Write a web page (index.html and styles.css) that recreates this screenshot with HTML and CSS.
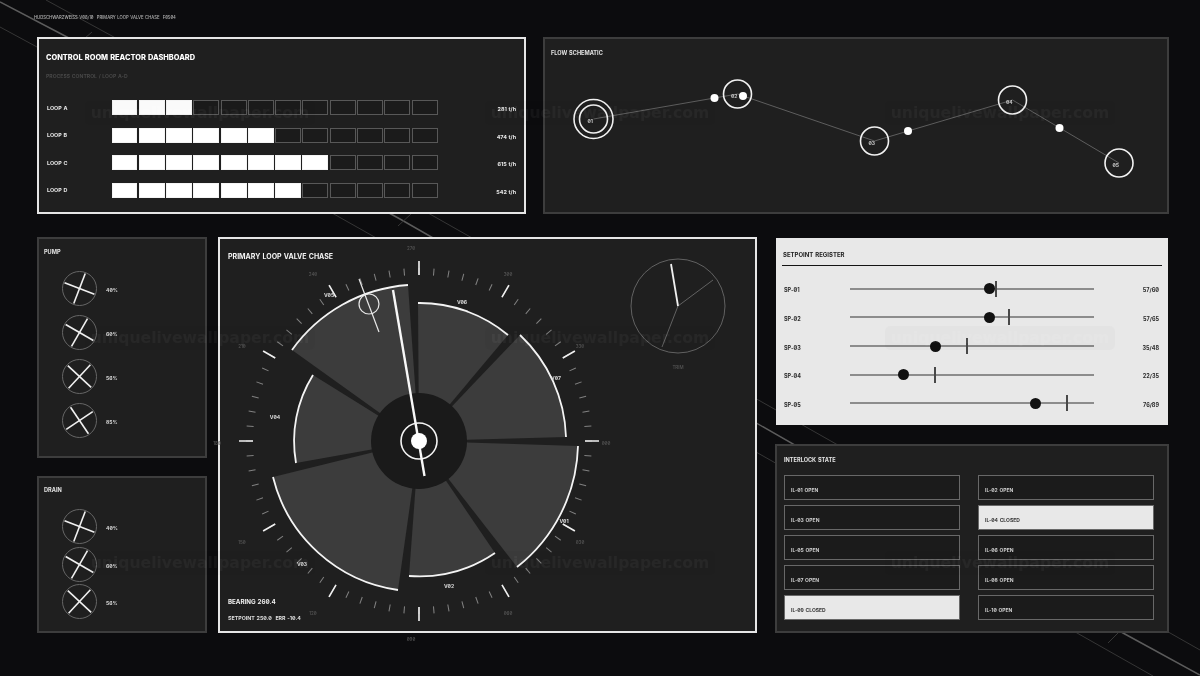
FILE: index.html
```html
<!DOCTYPE html>
<html lang="en">
<head>
    <meta charset="UTF-8">
    <title>Control Room Reactor Dashboard</title>
    <link rel="stylesheet" href="styles.css">
</head>
<body>
<svg class="streaks" viewBox="0 0 1200 676">
    <polyline class="bright" points="0,2 67,37 400,219 1123,633 1200,675"/>
    <polyline points="46,0 112,36 428,213 1170,633 1200,650"/>
    <polyline points="0,27 37,47 332,213 1077,633 1153,676"/>
    <line x1="85" y1="38" x2="92" y2="32"/>
    <line x1="398" y1="226" x2="412" y2="213"/>
    <line x1="1108" y1="643" x2="1118" y2="633"/>
</svg>

<div class="screen">
    <div class="hud-line">HUDSCHWARZWEISS V08/10&nbsp; PRIMARY LOOP VALVE CHASE&nbsp; F0504</div>

    <div class="row-top">
        <section class="panel panel-strong summary">
            <h1>CONTROL ROOM REACTOR DASHBOARD</h1>
            <p class="sub">PROCESS CONTROL / LOOP A-D</p>
            <div class="loops">
                <div class="loop">
                    <span class="loop-name">LOOP A</span>
                    <div class="cells">
                        <i class="on"></i><i class="on"></i><i class="on"></i><i></i><i></i><i></i><i></i><i></i><i></i><i></i><i></i><i></i>
                    </div>
                    <span class="loop-val">281 t/h</span>
                </div>
                <div class="loop">
                    <span class="loop-name">LOOP B</span>
                    <div class="cells">
                        <i class="on"></i><i class="on"></i><i class="on"></i><i class="on"></i><i class="on"></i><i class="on"></i><i></i><i></i><i></i><i></i><i></i><i></i>
                    </div>
                    <span class="loop-val">474 t/h</span>
                </div>
                <div class="loop">
                    <span class="loop-name">LOOP C</span>
                    <div class="cells">
                        <i class="on"></i><i class="on"></i><i class="on"></i><i class="on"></i><i class="on"></i><i class="on"></i><i class="on"></i><i class="on"></i><i></i><i></i><i></i><i></i>
                    </div>
                    <span class="loop-val">615 t/h</span>
                </div>
                <div class="loop">
                    <span class="loop-name">LOOP D</span>
                    <div class="cells">
                        <i class="on"></i><i class="on"></i><i class="on"></i><i class="on"></i><i class="on"></i><i class="on"></i><i class="on"></i><i></i><i></i><i></i><i></i><i></i>
                    </div>
                    <span class="loop-val">542 t/h</span>
                </div>
            </div>
        </section>

        <section class="panel flow">
            <h2>FLOW SCHEMATIC</h2>
            <svg class="canvas" viewBox="543 37 626 176">
                <polyline class="pipe" points="593.5,119 737.5,94 874.5,141 1012.5,100 1119,163"/>
                <circle class="node" cx="593.5" cy="119" r="19.5"/>
                <circle class="node" cx="593.5" cy="119" r="14"/>
                <circle class="node" cx="737.5" cy="94" r="14"/>
                <circle class="node" cx="874.5" cy="141" r="14"/>
                <circle class="node" cx="1012.5" cy="100" r="14"/>
                <circle class="node" cx="1119" cy="163" r="14"/>
                <circle class="dot" cx="714.5" cy="98" r="4"/>
                <circle class="dot" cx="743" cy="96" r="4"/>
                <circle class="dot" cx="908" cy="131" r="4"/>
                <circle class="dot" cx="1059.5" cy="128" r="4"/>
                <text class="node-id" x="587.5" y="123">01</text>
                <text class="node-id" x="731" y="98">02</text>
                <text class="node-id" x="868.5" y="145">03</text>
                <text class="node-id" x="1006" y="104">04</text>
                <text class="node-id" x="1112.5" y="167">05</text>
            </svg>
        </section>
    </div>

    <div class="row-bottom">
        <div class="col-left">
            <section class="panel pump">
                <h2>PUMP</h2>
                <div class="gauges">
                    <div class="gauge-row">
                        <svg class="gauge" viewBox="-17.5 -17.5 35 35"><circle r="17"/><g transform="rotate(21)"><line y1="-16" y2="16"/><line x1="-16" x2="16"/></g></svg>
                        <span>40%</span>
                    </div>
                    <div class="gauge-row">
                        <svg class="gauge" viewBox="-17.5 -17.5 35 35"><circle r="17"/><g transform="rotate(30)"><line y1="-16" y2="16"/><line x1="-16" x2="16"/></g></svg>
                        <span>60%</span>
                    </div>
                    <div class="gauge-row">
                        <svg class="gauge" viewBox="-17.5 -17.5 35 35"><circle r="17"/><g transform="rotate(43)"><line y1="-16" y2="16"/><line x1="-16" x2="16"/></g></svg>
                        <span>56%</span>
                    </div>
                    <div class="gauge-row">
                        <svg class="gauge" viewBox="-17.5 -17.5 35 35"><circle r="17"/><g transform="rotate(56)"><line y1="-16" y2="16"/><line x1="-16" x2="16"/></g></svg>
                        <span>85%</span>
                    </div>
                </div>
            </section>
            <section class="panel drain">
                <h2>DRAIN</h2>
                <div class="gauges tight">
                    <div class="gauge-row">
                        <svg class="gauge" viewBox="-17.5 -17.5 35 35"><circle r="17"/><g transform="rotate(21)"><line y1="-16" y2="16"/><line x1="-16" x2="16"/></g></svg>
                        <span>40%</span>
                    </div>
                    <div class="gauge-row">
                        <svg class="gauge" viewBox="-17.5 -17.5 35 35"><circle r="17"/><g transform="rotate(30)"><line y1="-16" y2="16"/><line x1="-16" x2="16"/></g></svg>
                        <span>60%</span>
                    </div>
                    <div class="gauge-row">
                        <svg class="gauge" viewBox="-17.5 -17.5 35 35"><circle r="17"/><g transform="rotate(43)"><line y1="-16" y2="16"/><line x1="-16" x2="16"/></g></svg>
                        <span>56%</span>
                    </div>
                </div>
            </section>
        </div>

        <section class="panel panel-strong dial">
            <svg class="canvas" viewBox="218 237 539 396">
                <!-- valve wedges -->
                <path class="wedge" d="M419 441L578 446A159.5 159.5 0 0 1 517 567Z"/>
                <path class="wedge" d="M419 441L495 553A135 135 0 0 1 409 576Z"/>
                <path class="wedge" d="M419 441L398 590A150.5 150.5 0 0 1 273 477Z"/>
                <path class="wedge" d="M419 441L296 463A125 125 0 0 1 313 375Z"/>
                <path class="wedge" d="M419 441L292 350A156 156 0 0 1 408 285Z"/>
                <path class="wedge" d="M419 441L418 303A138 138 0 0 1 508 335Z"/>
                <path class="wedge" d="M419 441L520 335A146.5 146.5 0 0 1 566 437Z"/>
                <path class="rim" d="M578 446A159.5 159.5 0 0 1 517 567"/>
                <path class="rim" d="M495 553A135 135 0 0 1 409 576"/>
                <path class="rim" d="M398 590A150.5 150.5 0 0 1 273 477"/>
                <path class="rim" d="M296 463A125 125 0 0 1 313 375"/>
                <path class="rim" d="M292 350A156 156 0 0 1 408 285"/>
                <path class="rim" d="M418 303A138 138 0 0 1 508 335"/>
                <path class="rim" d="M520 335A146.5 146.5 0 0 1 566 437"/>

                <!-- scale -->
                <circle class="ticks-minor" cx="419" cy="441" r="169.5" pathLength="72"/>
                <circle class="ticks-major" cx="419" cy="441" r="173" pathLength="12"/>
                <text class="deg" x="606" y="445">000</text>
                <text class="deg" x="580" y="544">030</text>
                <text class="deg" x="508" y="615">060</text>
                <text class="deg" x="411" y="641">090</text>
                <text class="deg" x="313" y="615">120</text>
                <text class="deg" x="242" y="544">150</text>
                <text class="deg" x="217" y="445">180</text>
                <text class="deg" x="242" y="348">210</text>
                <text class="deg" x="313" y="276">240</text>
                <text class="deg" x="411" y="250">270</text>
                <text class="deg" x="508" y="276">300</text>
                <text class="deg" x="580" y="348">330</text>

                <text class="valve" x="564" y="523">V01</text>
                <text class="valve" x="449" y="588">V02</text>
                <text class="valve" x="302" y="566">V03</text>
                <text class="valve" x="275" y="419">V04</text>
                <text class="valve" x="329" y="297">V05</text>
                <text class="valve" x="462" y="304">V06</text>
                <text class="valve" x="556" y="380">V07</text>

                <!-- setpoint marker -->
                <line class="setpoint" x1="359" y1="279" x2="379" y2="332"/>
                <circle class="setpoint" cx="369" cy="304" r="10"/>

                <circle class="hub" cx="419" cy="441" r="48"/>
                <line class="needle" x1="393" y1="290" x2="424.5" y2="476"/>
                <circle class="hub-ring" cx="419" cy="441" r="18"/>
                <circle class="hub-dot" cx="419" cy="441" r="8"/>

                <!-- trim dial -->
                <circle class="trim-ring" cx="678" cy="306" r="47"/>
                <line class="trim-thin" x1="678" y1="306" x2="713" y2="280"/>
                <line class="trim-thin" x1="678" y1="306" x2="662" y2="347"/>
                <line class="trim-hand" x1="678" y1="306" x2="671" y2="264"/>
                <text class="deg" x="678" y="369">TRIM</text>
            </svg>
            <h2 class="dial-title">PRIMARY LOOP VALVE CHASE</h2>
            <div class="readout">
                <div class="bearing">BEARING 260.4</div>
                <div class="err">SETPOINT 250.0&nbsp; ERR -10.4</div>
            </div>
        </section>

        <div class="col-right">
            <section class="setpoints">
                <h2>SETPOINT REGISTER</h2>
                <div class="sp-rows">
                    <div class="sp">
                        <span>SP-01</span>
                        <div class="track"><b style="left:57%"></b><u style="left:60%"></u></div>
                        <span class="sp-val">57/60</span>
                    </div>
                    <div class="sp">
                        <span>SP-02</span>
                        <div class="track"><b style="left:57%"></b><u style="left:65%"></u></div>
                        <span class="sp-val">57/65</span>
                    </div>
                    <div class="sp">
                        <span>SP-03</span>
                        <div class="track"><b style="left:35%"></b><u style="left:48%"></u></div>
                        <span class="sp-val">35/48</span>
                    </div>
                    <div class="sp">
                        <span>SP-04</span>
                        <div class="track"><b style="left:22%"></b><u style="left:35%"></u></div>
                        <span class="sp-val">22/35</span>
                    </div>
                    <div class="sp">
                        <span>SP-05</span>
                        <div class="track"><b style="left:76%"></b><u style="left:89%"></u></div>
                        <span class="sp-val">76/89</span>
                    </div>
                </div>
            </section>
            <section class="panel interlock">
                <h2>INTERLOCK STATE</h2>
                <div class="il-grid">
                    <div class="il">IL-01 OPEN</div>
                    <div class="il">IL-02 OPEN</div>
                    <div class="il">IL-03 OPEN</div>
                    <div class="il closed">IL-04 CLOSED</div>
                    <div class="il">IL-05 OPEN</div>
                    <div class="il">IL-06 OPEN</div>
                    <div class="il">IL-07 OPEN</div>
                    <div class="il">IL-08 OPEN</div>
                    <div class="il closed">IL-09 CLOSED</div>
                    <div class="il">IL-10 OPEN</div>
                </div>
            </section>
        </div>
    </div>
</div>

<div class="marks">
    <span>uniquelivewallpaper.com</span><span>uniquelivewallpaper.com</span><span>uniquelivewallpaper.com</span>
    <span>uniquelivewallpaper.com</span><span>uniquelivewallpaper.com</span><span>uniquelivewallpaper.com</span>
    <span>uniquelivewallpaper.com</span><span>uniquelivewallpaper.com</span><span>uniquelivewallpaper.com</span>
</div>
</body>
</html>
```
FILE: styles.css
```css
* {
    box-sizing: border-box;
}

html, body {
    margin: 0;
    height: 676px;
    overflow: hidden;
    background: #0c0c0e;
}

body {
    position: relative;
    font-family: Inter, "Liberation Sans", sans-serif;
    font-feature-settings: "zero";
    font-weight: 700;
    word-spacing: .5px;
    color: #e8e8e8;
}

h1, h2, p {
    margin: 0;
}

/* the reference is soft and has no colour fringes on its text */
.screen, .streaks, .marks {
    filter: grayscale(1) blur(.3px);
}

/* background streaks */
.streaks {
    position: absolute;
    left: 0;
    top: 0;
    width: 1200px;
    height: 676px;
}

.streaks line, .streaks polyline {
    fill: none;
    stroke: #363638;
    stroke-width: 1;
}

.streaks .bright {
    stroke: #5c5c5e;
    stroke-width: 1.5;
}

.screen {
    position: relative;
    padding: 14px 0 0 37px;
}

.hud-line {
    height: 7px;
    margin: 0 0 16px -3px;
    font-size: 4.2px;
    line-height: 7px;
    font-weight: 500;
    color: #b4b4b4;
    white-space: nowrap;
}

.panel {
    position: relative;
    background: #1f1f21;
    border: 2px solid #3d3d3f;
}

.panel-strong {
    border-color: #e6e6e6;
}

.panel h2 {
    font-size: 5.6px;
    line-height: 8px;
    color: #e4e4e4;
}

.canvas {
    position: absolute;
    left: -2px;
    top: -2px;
    overflow: visible;
}

.row-top {
    display: flex;
    gap: 17px;
    height: 177px;
}

.row-bottom {
    display: flex;
    gap: 11px;
    margin-top: 23px;
    height: 396px;
}

/* summary */
.summary {
    width: 489px;
    padding: 14px 8px 0 7px;
}

.summary h1 {
    font-size: 7.4px;
    line-height: 10px;
    font-weight: 800;
    color: #fff;
}

.sub {
    margin-top: 9px;
    font-size: 5.1px;
    line-height: 9px;
    color: #47474a;
}

.loops {
    display: flex;
    flex-direction: column;
    gap: 12.5px;
    margin-top: 19px;
}

.loop {
    display: grid;
    grid-template-columns: 65.5px 326px 1fr;
    align-items: center;
    height: 15px;
    font-size: 5.4px;
}

.loop-name {
    padding-left: 1px;
}

.loop-val {
    padding-top: 3px;
    text-align: right;
}

.cells {
    display: grid;
    grid-template-columns: repeat(12, 1fr);
    gap: 1.3px;
    height: 15px;
}

.cells i {
    border: 1px solid #58585a;
    background: #1b1b1d;
}

.cells i.on {
    border-color: #f4f4f4;
    background: #fff;
}

/* flow */
.flow {
    width: 626px;
    padding: 10px 6px;
}

.flow .canvas {
    width: 626px;
    height: 176px;
}

.pipe {
    fill: none;
    stroke: #5e5e60;
    stroke-width: 1;
}

.node {
    fill: none;
    stroke: #f2f2f2;
    stroke-width: 1.6;
}

.dot {
    fill: #fff;
}

.node-id {
    font-size: 5px;
    fill: #c8c8c8;
}

/* left column */
.col-left {
    display: flex;
    flex-direction: column;
    gap: 18px;
    width: 170px;
}

.pump {
    height: 221px;
    padding: 9px 5px;
}

.drain {
    height: 157px;
    padding: 8px 5px;
}

.gauges {
    display: flex;
    flex-direction: column;
    gap: 9px;
    margin: 15px 0 0 18px;
}

.gauges.tight {
    gap: 2.6px;
}

.gauge-row {
    display: flex;
    align-items: center;
    gap: 9px;
    font-size: 5px;
    color: #d8d8d8;
}

.gauge-row span {
    padding-top: 3px;
}

.gauge {
    width: 35px;
    height: 35px;
}

.gauge circle {
    fill: none;
    stroke: #666668;
    stroke-width: 1;
}

.gauge line {
    stroke: #f0f0f0;
    stroke-width: 1.6;
}

/* main dial */
.dial {
    display: flex;
    flex-direction: column;
    justify-content: space-between;
    width: 539px;
    padding: 13px 8px 9px;
}

.dial .canvas {
    width: 539px;
    height: 396px;
}

.dial-title, .readout {
    position: relative;
}

.panel .dial-title {
    font-size: 7px;
    line-height: 9px;
    color: #f4f4f4;
}

.bearing {
    font-size: 6.2px;
    line-height: 9px;
    color: #f0f0f0;
}

.err {
    margin-top: 8px;
    font-size: 5.3px;
    line-height: 8px;
    color: #dcdcdc;
}

.wedge {
    fill: #3c3c3e;
}

.rim {
    fill: none;
    stroke: #f4f4f4;
    stroke-width: 1.8;
}

.ticks-minor {
    fill: none;
    stroke: #808083;
    stroke-width: 7;
    stroke-dasharray: .07 .93;
    stroke-dashoffset: .035;
}

.ticks-major {
    fill: none;
    stroke: #f0f0f0;
    stroke-width: 14;
    stroke-dasharray: .018 .982;
    stroke-dashoffset: .009;
}

.deg {
    font-size: 4.5px;
    font-weight: 500;
    fill: #57575a;
    text-anchor: middle;
}

.valve {
    font-size: 5px;
    fill: #dcdcdc;
    text-anchor: middle;
}

.setpoint {
    fill: none;
    stroke: #e8e8e8;
    stroke-width: 1.2;
}

.hub {
    fill: #1a1a1c;
}

.needle {
    stroke: #f8f8f8;
    stroke-width: 2.4;
}

.hub-ring {
    fill: none;
    stroke: #f4f4f4;
    stroke-width: 1.6;
}

.hub-dot {
    fill: #fff;
}

.trim-ring, .trim-thin {
    fill: none;
    stroke: #626264;
    stroke-width: 1;
}

.trim-hand {
    stroke: #f0f0f0;
    stroke-width: 1.8;
}

/* right column */
.col-right {
    display: flex;
    flex-direction: column;
    gap: 19px;
    width: 394px;
    margin-left: 7px;
    padding-top: 1px;
}

.setpoints {
    height: 187px;
    margin-left: 1px;
    width: 392px;
    padding: 13px 6px 0;
    background: #e8e8ea;
    color: #2c2c2e;
    font-size: 5.5px;
}

.setpoints h2 {
    padding: 0 0 6px 1px;
    border-bottom: 1.5px solid #141416;
    font-size: 6px;
    line-height: 8px;
    color: #222;
}

.sp-rows {
    display: flex;
    flex-direction: column;
    gap: 12.7px;
    margin-top: 14.7px;
}

.sp {
    display: grid;
    grid-template-columns: 66px 244px 1fr;
    align-items: center;
    height: 16px;
    padding: 0 3px 0 2px;
}

.sp > span {
    padding-top: 3px;
}

.sp-val {
    text-align: right;
}

.track {
    position: relative;
    height: 2px;
    background: #8c8c8e;
}

.track b {
    position: absolute;
    top: -4.5px;
    width: 11px;
    height: 11px;
    margin-left: -5.5px;
    border-radius: 50%;
    background: #111113;
}

.track u {
    position: absolute;
    top: -7px;
    width: 2px;
    height: 16px;
    margin-left: -1px;
    background: #48484a;
}

.interlock {
    height: 189px;
    padding: 10px 7px 0 7px;
}

.il-grid {
    display: grid;
    grid-template-columns: 176px 176px;
    grid-auto-rows: 25px;
    gap: 5px 18px;
    margin: 11px 0 0;
}

.il {
    padding: 11px 0 0 6px;
    border: 1px solid #68686a;
    background: #1b1b1d;
    font-size: 5px;
    line-height: 7px;
    color: #cfcfcf;
}

.il.closed {
    background: #e8e8e8;
    color: #333;
}

/* watermark tiles */
.marks {
    position: absolute;
    left: 0;
    top: 0;
    display: grid;
    grid-template-columns: repeat(3, 400px);
    grid-auto-rows: 225.33px;
    place-items: center;
    width: 1200px;
    pointer-events: none;
}

.marks span {
    padding: 3px 6px;
    border-radius: 5px;
    background: rgba(0, 0, 0, .018);
    font-family: "DejaVu Sans", sans-serif;
    font-size: 15.6px;
    word-spacing: 0;
    color: rgba(255, 255, 255, .04);
}
```
